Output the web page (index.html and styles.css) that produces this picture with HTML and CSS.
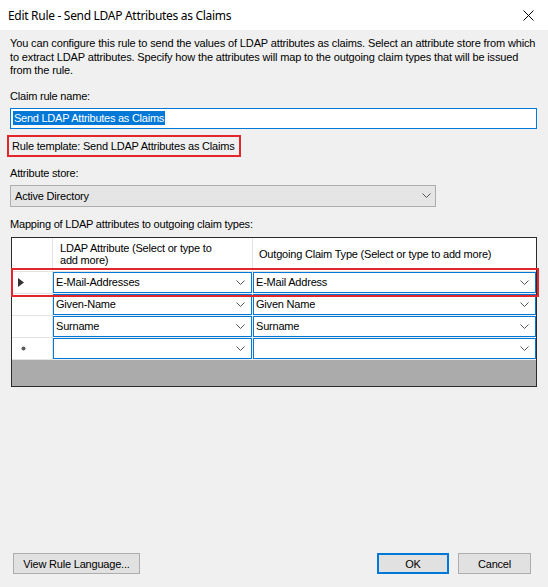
FILE: index.html
```html
<!DOCTYPE html>
<html>
<head>
<meta charset="utf-8">
<title>Edit Rule</title>
<link rel="stylesheet" href="styles.css">
</head>
<body>
<div class="dialog">
  <div class="titlebar">
    <span class="title">Edit Rule - Send LDAP Attributes as Claims</span>
    <svg class="close" width="11" height="11" viewBox="0 0 11 11"><path d="M0.5 0.5L10.5 10.5M10.5 0.5L0.5 10.5" stroke="#000" stroke-width="1" fill="none"/></svg>
  </div>
  <div class="content">
    <p class="desc">You can configure this rule to send the values of LDAP attributes as claims. Select an attribute store from which<br>to extract LDAP attributes. Specify how the attributes will map to the outgoing claim types that will be issued<br>from the rule.</p>
    <div class="label lbl-claim">Claim rule name:</div>
    <div class="textbox"><span class="sel">Send LDAP Attributes as Claims</span></div>
    <div class="template">Rule template: Send LDAP Attributes as Claims</div>
    <div class="label lbl-store">Attribute store:</div>
    <div class="select">
      <span>Active Directory</span>
      <svg class="chev" width="9" height="5" viewBox="0 0 9 5"><path d="M0.5 0.5L4.5 4.5L8.5 0.5" stroke="#555" stroke-width="1" fill="none"/></svg>
    </div>
    <div class="label lbl-map">Mapping of LDAP attributes to outgoing claim types:</div>
    <div class="gridwrap">
      <div class="grid">
        <div class="hcell rowhead"></div>
        <div class="hcell col-ldap">LDAP Attribute (Select or type to<br>add more)</div>
        <div class="hcell col-claim">Outgoing Claim Type (Select or type to add more)</div>

        <div class="rowhead"><svg width="6" height="9" viewBox="0 0 6 9"><path d="M0 0L6 4.5L0 9Z" fill="#333"/></svg></div>
        <div class="cell"><div class="combo"><span>E-Mail-Addresses</span><svg class="chev" width="9" height="5" viewBox="0 0 9 5"><path d="M0.5 0.5L4.5 4.5L8.5 0.5" stroke="#555" stroke-width="1" fill="none"/></svg></div></div>
        <div class="cell last"><div class="combo"><span>E-Mail Address</span><svg class="chev" width="9" height="5" viewBox="0 0 9 5"><path d="M0.5 0.5L4.5 4.5L8.5 0.5" stroke="#555" stroke-width="1" fill="none"/></svg></div></div>

        <div class="rowhead"></div>
        <div class="cell"><div class="combo"><span>Given-Name</span><svg class="chev" width="9" height="5" viewBox="0 0 9 5"><path d="M0.5 0.5L4.5 4.5L8.5 0.5" stroke="#555" stroke-width="1" fill="none"/></svg></div></div>
        <div class="cell last"><div class="combo"><span>Given Name</span><svg class="chev" width="9" height="5" viewBox="0 0 9 5"><path d="M0.5 0.5L4.5 4.5L8.5 0.5" stroke="#555" stroke-width="1" fill="none"/></svg></div></div>

        <div class="rowhead"></div>
        <div class="cell"><div class="combo"><span>Surname</span><svg class="chev" width="9" height="5" viewBox="0 0 9 5"><path d="M0.5 0.5L4.5 4.5L8.5 0.5" stroke="#555" stroke-width="1" fill="none"/></svg></div></div>
        <div class="cell last"><div class="combo"><span>Surname</span><svg class="chev" width="9" height="5" viewBox="0 0 9 5"><path d="M0.5 0.5L4.5 4.5L8.5 0.5" stroke="#555" stroke-width="1" fill="none"/></svg></div></div>

        <div class="rowhead"><svg width="5" height="5" viewBox="0 0 5 5"><circle cx="2.5" cy="2.5" r="2" fill="#5a5a5a"/></svg></div>
        <div class="cell"><div class="combo"><span></span><svg class="chev" width="9" height="5" viewBox="0 0 9 5"><path d="M0.5 0.5L4.5 4.5L8.5 0.5" stroke="#555" stroke-width="1" fill="none"/></svg></div></div>
        <div class="cell last"><div class="combo"><span></span><svg class="chev" width="9" height="5" viewBox="0 0 9 5"><path d="M0.5 0.5L4.5 4.5L8.5 0.5" stroke="#555" stroke-width="1" fill="none"/></svg></div></div>
      </div>
      <div class="highlight"></div>
    </div>
    <div class="spacer"></div>
    <div class="buttons">
      <button class="btn btn-view">View Rule Language...</button>
      <div class="spacer-h"></div>
      <button class="btn btn-ok">OK</button>
      <button class="btn btn-cancel">Cancel</button>
    </div>
  </div>
</div>
</body>
</html>
```

FILE: styles.css
```css
* { box-sizing: border-box; }
html, body { margin: 0; padding: 0; }
body {
  width: 548px;
  height: 587px;
  overflow: hidden;
  background: #f0f0f0;
  color: #000;
  font-family: "Liberation Sans", Arial, sans-serif;
  font-size: 11px;
  letter-spacing: -0.2px;
}
.dialog {
  display: flex;
  flex-direction: column;
  height: 587px;
}
.titlebar {
  flex: none;
  height: 30px;
  background: #fff;
  display: flex;
  align-items: center;
  justify-content: space-between;
  padding: 0 14px 0 8px;
}
.title {
  font-family: "Noto Sans", sans-serif;
  font-size: 12px;
  letter-spacing: -0.3px;
  color: #000;
}
.close { display: block; }
.content {
  flex: 1;
  display: flex;
  flex-direction: column;
  padding: 7px 10px 13px 10px;
}
.desc {
  margin: 0;
  line-height: 13.5px;
  white-space: nowrap;
  letter-spacing: -0.14px;
}
.label { line-height: 13px; white-space: nowrap; }
.lbl-claim { margin-top: 12px; }
.textbox {
  margin-top: 5px;
  height: 21px;
  width: 527px;
  border: 1px solid #0078d7;
  background: #fff;
  display: flex;
  align-items: center;
  padding-left: 2px;
}
.textbox .sel {
  background: #0078d7;
  color: #fff;
  line-height: 14px;
  padding: 0 1px 0 1px;
  letter-spacing: -0.25px;
}
.template {
  align-self: flex-start;
  margin-top: 6px;
  margin-left: -3px;
  width: 234px;
  height: 22px;
  border: 2px solid #e3262b;
  padding-left: 3px;
  line-height: 18px;
  white-space: nowrap;
}
.lbl-store { margin-top: 10px; }
.select {
  margin-top: 5px;
  width: 426px;
  height: 22px;
  background: #e5e5e5;
  border: 1px solid #adadad;
  display: flex;
  align-items: center;
  justify-content: space-between;
  padding: 0 4px 0 4px;
}
.lbl-map { margin-top: 11px; }
.gridwrap {
  position: relative;
  margin-top: 6px;
  margin-left: 1px;
  width: 526px;
  height: 150px;
  border: 1px solid #2b2b2b;
  background: #ababab;
}
.grid {
  display: grid;
  grid-template-columns: 41px 200px 283px;
  grid-template-rows: 34px 22px 22px 22px 22px;
}
.hcell {
  background: #fff;
  border-right: 1px solid #e3e3e3;
  border-bottom: 1px solid #e3e3e3;
  display: flex;
  align-items: center;
  line-height: 12.5px;
  white-space: nowrap;
}
.hcell.col-ldap { padding-left: 7px; }
.hcell.col-claim { padding-left: 6px; border-right: none; }
.rowhead {
  background: #fff;
  border-right: 1px solid #e3e3e3;
  border-bottom: 1px solid #e3e3e3;
  display: flex;
  align-items: center;
  padding-left: 6px;
}
.grid > .rowhead:nth-child(13) { padding-left: 9px; }
.cell {
  background: #fff;
  border-right: 1px solid #f0f0f0;
  border-bottom: 1px solid #f0f0f0;
}
.cell.last { border-right: none; }
.combo {
  height: 100%;
  border: 1px solid #0078d7;
  background: #fff;
  display: flex;
  align-items: center;
  justify-content: space-between;
  padding: 0 6px 0 2px;
  white-space: nowrap;
}
.highlight {
  position: absolute;
  left: -1px;
  top: 30px;
  width: 528px;
  height: 29px;
  border: 2px solid #e3262b;
}
.spacer { flex: 1; }
.buttons {
  display: flex;
  align-items: center;
  height: 21px;
}
.spacer-h { flex: 1; }
.btn {
  font-family: "Liberation Sans", Arial, sans-serif;
  font-size: 11px;
  letter-spacing: -0.2px;
  color: #000;
  height: 21px;
  background: #e1e1e1;
  border: 1px solid #adadad;
  padding: 0;
  margin: 0;
}
.btn-view { margin-left: 3px; width: 127px; }
.btn-ok { width: 72px; border: 2px solid #0078d7; }
.btn-cancel { width: 73px; margin-left: 9px; margin-right: 7px; }
```
